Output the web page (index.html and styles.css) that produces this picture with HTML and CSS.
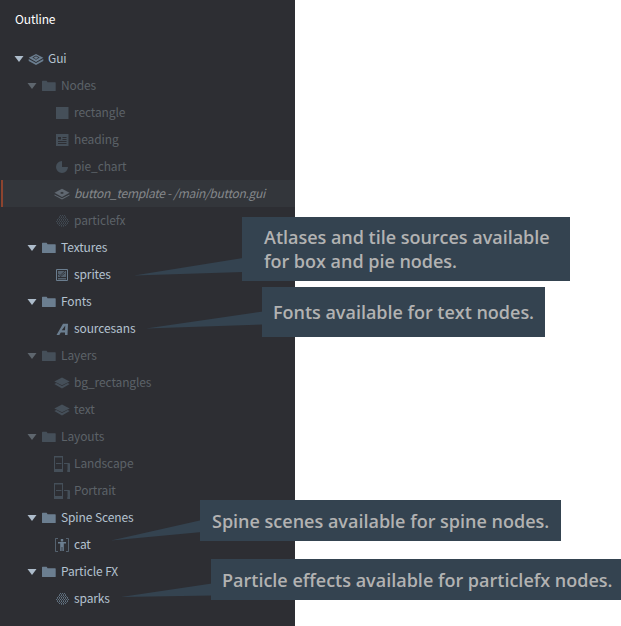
FILE: index.html
```html
<!DOCTYPE html>
<html lang="en">
<head>
<meta charset="utf-8">
<title>Outline</title>
<link rel="stylesheet" href="styles.css">
</head>
<body>
<svg class="defs" width="0" height="0" aria-hidden="true">
  <defs>
    <symbol id="arrow" viewBox="0 0 9 6"><path d="M0 0h9L4.500 6z"/></symbol>
    <symbol id="folder" viewBox="0 0 16 16"><path d="M1 3.300q0-.6.6-.6h4l1 1.500h7.500q.6 0 .6.6v7.600q0 .6-.6.6H1.600q-.6 0-.6-.6z"/></symbol>
    <symbol id="gui" viewBox="0 0 16 16"><path fill-rule="evenodd" d="M8 3l7.300 3.800L8 10.900.7 6.800zM8 4.500L4.300 6.600 8 8.800l3.700-2.200z"/><path d="M8 5.300l2.500 1.400L8 8 5.500 6.700z"/><path d="M.7 8L8 12l7.300-4v2L8 13.900.7 10z"/></symbol>
    <symbol id="template" viewBox="0 0 16 16"><path fill-rule="evenodd" d="M8 2.700l7.500 4L8 10.900.5 6.700zM8 5.800L6 6.900l2 1.200 2-1.200z"/><path d="M.5 8.500L8 12.200l7.500-3.700v1L8 13.500.5 9.500z"/></symbol>
    <symbol id="layer" viewBox="0 0 16 16"><path d="M8 2.500l7.700 4L8 10.300.3 6.500zM.3 9l2-1L8 11l5.700-3 2 1L8 13.400z"/></symbol>
    <symbol id="box" viewBox="0 0 16 16"><path d="M2 2h12.500v12H2z"/></symbol>
    <symbol id="text" viewBox="0 0 16 16"><path fill-rule="evenodd" d="M2 2h12.500v12H2zM4 5h3v2.500H4zM8.500 5h4v1h-4zM8.500 7h4v1h-4zM4 9h8.500v1H4zM4 11h8.500v1H4z"/></symbol>
    <symbol id="pie" viewBox="0 0 16 16"><path d="M8 2v6h6a6 6 0 1 1-6-6z"/></symbol>
    <symbol id="particles" viewBox="0 0 16 16"><path fill="none" stroke="currentColor" stroke-dasharray="1 1" d="M6 2.500h5M5 4.500h7M3 6.500h11M2 8.500h13M3 10.500h11M5 12.500h7" opacity=".85"/><path fill="none" stroke="currentColor" stroke-dasharray="1 1" d="M5 3.500h7M4 5.500h9M3 7.500h11M3 9.500h11M4 11.500h9M7 13.500h3" opacity=".6"/></symbol>
    <symbol id="atlas" viewBox="0 0 16 16"><path fill="none" stroke="currentColor" d="M2.500 2.500h11v11h-11z"/><path d="M4 4h8v6H4zM4 11h8v1.500H4z" opacity=".65"/><path fill="none" stroke="#2d2e33" stroke-width=".8" d="M4 7l2 1.500L11 4M6 10l5-4"/></symbol>
    <symbol id="font" viewBox="0 0 16 16"><path fill-rule="evenodd" d="M2.500 14L9 2.700h5L13.500 14H11v-2.500H6.800L5.300 14zM7.800 9.300H11l.3-4.800z"/></symbol>
    <symbol id="layout" viewBox="0 0 16 16"><path fill="none" stroke="currentColor" d="M.5 .5h8v15h-8zM2 7.500h5.500M10 7.500h5.500v7.500H13"/><path d="M0 0h9v1.500H0zM0 13h9v3H0zM13.500 8H16v8h-2.500z"/></symbol>
    <symbol id="spine" viewBox="0 0 16 16"><path fill="none" stroke="currentColor" opacity=".65" d="M4 1.500H1.500v13H4M12 1.500h2.500v13H12"/><path d="M6.800 2h2.400v2.500H6.800zM4 5h8v1.500H9.800V14H8.400v-4h-.8v4H6.200V6.500H4z"/></symbol>
  </defs>
</svg>
<main class="stage">
  <section class="panel">
    <h1 class="title">Outline</h1>
    <ul class="tree">
      <li class="row root"><svg class="arrow"><use href="#arrow"/></svg><svg class="icon"><use href="#gui"/></svg><span>Gui</span></li>
      <li class="row group dim"><svg class="arrow"><use href="#arrow"/></svg><svg class="icon"><use href="#folder"/></svg><span>Nodes</span></li>
      <li class="row leaf dim"><svg class="icon"><use href="#box"/></svg><span>rectangle</span></li>
      <li class="row leaf dim"><svg class="icon"><use href="#text"/></svg><span>heading</span></li>
      <li class="row leaf dim"><svg class="icon"><use href="#pie"/></svg><span>pie_chart</span></li>
      <li class="row leaf dim selected"><svg class="icon"><use href="#template"/></svg><span>button_template - /main/button.gui</span></li>
      <li class="row leaf dim"><svg class="icon"><use href="#particles"/></svg><span>particlefx</span></li>
      <li class="row group"><svg class="arrow"><use href="#arrow"/></svg><svg class="icon"><use href="#folder"/></svg><span>Textures</span></li>
      <li class="row leaf"><svg class="icon"><use href="#atlas"/></svg><span>sprites</span></li>
      <li class="row group"><svg class="arrow"><use href="#arrow"/></svg><svg class="icon"><use href="#folder"/></svg><span>Fonts</span></li>
      <li class="row leaf"><svg class="icon"><use href="#font"/></svg><span>sourcesans</span></li>
      <li class="row group dim"><svg class="arrow"><use href="#arrow"/></svg><svg class="icon"><use href="#folder"/></svg><span>Layers</span></li>
      <li class="row leaf dim"><svg class="icon"><use href="#layer"/></svg><span>bg_rectangles</span></li>
      <li class="row leaf dim"><svg class="icon"><use href="#layer"/></svg><span>text</span></li>
      <li class="row group dim"><svg class="arrow"><use href="#arrow"/></svg><svg class="icon"><use href="#folder"/></svg><span>Layouts</span></li>
      <li class="row leaf dim"><svg class="icon"><use href="#layout"/></svg><span>Landscape</span></li>
      <li class="row leaf dim"><svg class="icon"><use href="#layout"/></svg><span>Portrait</span></li>
      <li class="row group"><svg class="arrow"><use href="#arrow"/></svg><svg class="icon"><use href="#folder"/></svg><span>Spine Scenes</span></li>
      <li class="row leaf"><svg class="icon"><use href="#spine"/></svg><span>cat</span></li>
      <li class="row group"><svg class="arrow"><use href="#arrow"/></svg><svg class="icon"><use href="#folder"/></svg><span>Particle FX</span></li>
      <li class="row leaf"><svg class="icon"><use href="#particles"/></svg><span>sparks</span></li>
    </ul>
  </section>
  <svg class="pointers" viewBox="0 0 621 626"><path d="M134 275.500L243 258v14zM146 328.500L263 311.500v13zM111 540.500L202 520v12zM121 597L212 583.500v12z"/></svg>
  <p class="callout textures">Atlases and tile sources available<br>for box and pie nodes.</p>
  <p class="callout fonts">Fonts available for text nodes.</p>
  <p class="callout spines">Spine scenes available for spine nodes.</p>
  <p class="callout effects">Particle effects available for particlefx nodes.</p>
</main>
</body>
</html>
```
FILE: styles.css
```css
* { box-sizing: border-box; }
body { margin: 0; background: #fff; }
.defs { position: absolute; }
.stage { position: relative; width: 621px; height: 626px; overflow: hidden; }
.panel {
  width: 295px;
  height: 626px;
  background: #2d2e33;
  font: 12px/27px "Noto Sans CJK SC", sans-serif;
  letter-spacing: -0.11px;
  color: #b4c2d0;
}
.title { margin: 0; padding: 5px 0 0 15px; height: 45px; font-size: 12px; font-weight: 400; letter-spacing: -0.15px; color: #fff; }
.tree { margin: 0; padding: 0; list-style: none; }
.row { display: flex; align-items: center; height: 27px; white-space: nowrap; }
.row span { padding-bottom: 2px; line-height: 25px; }
.root { padding-left: 14px; }
.group { padding-left: 27px; }
.leaf { padding-left: 54px; }
.arrow { width: 10px; height: 6px; margin: 0 4px 0 0; fill: #adbccb; }
.icon { width: 16px; height: 16px; margin-right: 4px; flex: none; fill: #6b7e90; color: #6b7e90; }
.dim { color: #5c6268; }
.dim .arrow { fill: #5e666e; }
.dim .icon { fill: #454f59; color: #454f59; }
.selected { background: #33363b; border-left: 2px solid #8c442f; margin-left: 1px; padding-left: 51px; color: #85888b; font-style: italic; letter-spacing: -0.3px; }
.selected .icon { fill: #606871; }
.pointers { position: absolute; inset: 0; width: 621px; height: 626px; fill: #344350; }
.callout {
  position: absolute;
  margin: 0;
  background: #344350;
  color: #b2b2b2;
  font: 600 18px/24px "Open Sans", sans-serif;
  white-space: nowrap;
}
.textures { left: 242px; top: 217px; width: 328px; height: 64px; padding: 8px 0 0 22px; letter-spacing: -0.02px; }
.fonts { left: 262px; top: 287px; width: 283px; height: 50px; padding: 13px 0 0 11px; letter-spacing: -0.02px; }
.spines { left: 200px; top: 500px; width: 361px; height: 41px; padding: 9px 0 0 12px; }
.effects { left: 211px; top: 559px; width: 410px; height: 41px; padding: 9px 0 0 11px; }
```
